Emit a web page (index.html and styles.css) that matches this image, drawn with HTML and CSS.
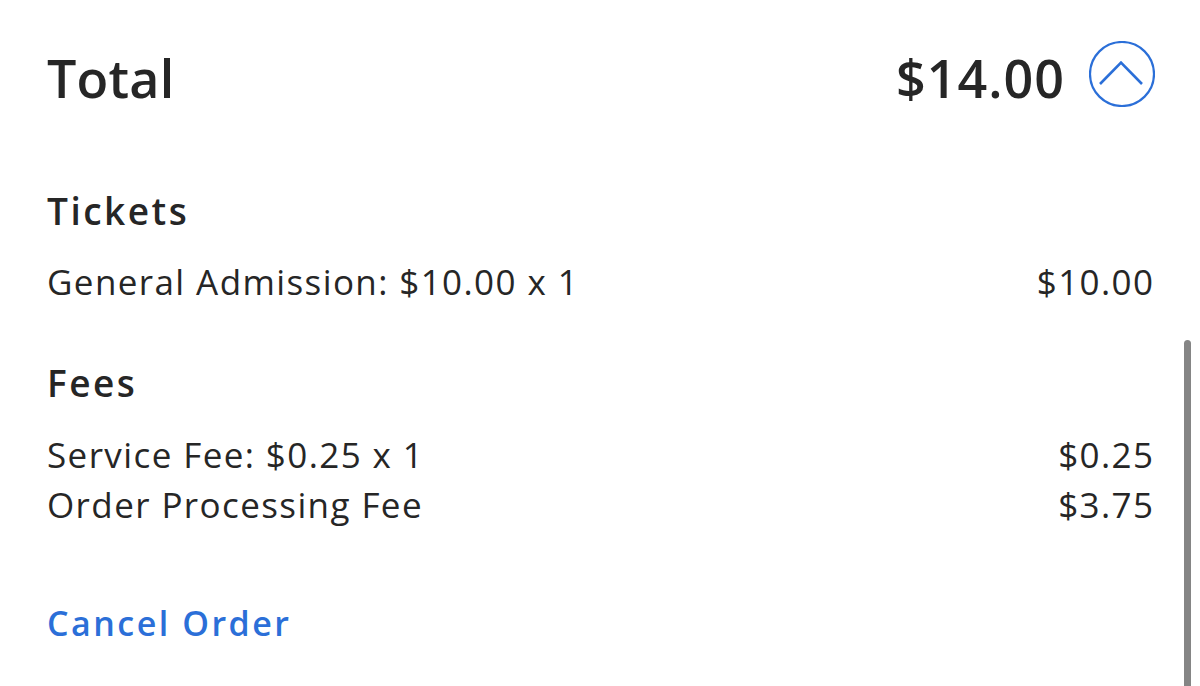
FILE: index.html
```html
<!DOCTYPE html>
<html lang="en">
<head>
<meta charset="utf-8">
<title>Order Summary</title>
<link rel="stylesheet" href="styles.css">
</head>
<body>
<main class="panel">
  <header class="total-row">
    <h1 class="total-label">Total</h1>
    <div class="total-right">
      <span class="total-amount">$14.00</span>
      <button class="toggle" aria-label="Collapse">
        <svg viewBox="0 0 66 66" width="66" height="66">
          <circle cx="33" cy="33" r="32" fill="none" stroke="#2b6fd8" stroke-width="2.2"/>
          <polyline points="11,43 32,21.5 53,43" fill="none" stroke="#2b6fd8" stroke-width="2.6"/>
        </svg>
      </button>
    </div>
  </header>

  <section class="group group-tickets">
    <h2 class="group-title">Tickets</h2>
    <div class="line"><span>General Admission: $10.00 x 1</span><span>$10.00</span></div>
  </section>

  <section class="group group-fees">
    <h2 class="group-title">Fees</h2>
    <div class="line"><span>Service Fee: $0.25 x 1</span><span>$0.25</span></div>
    <div class="line"><span>Order Processing Fee</span><span>$3.75</span></div>
  </section>

  <a class="cancel" href="#">Cancel Order</a>

  <div class="scrollbar"></div>
</main>
</body>
</html>
```

FILE: styles.css
```css
* { box-sizing: border-box; }
html, body { margin: 0; padding: 0; background: #fff; }
body {
  width: 1200px;
  height: 686px;
  overflow: hidden;
  font-family: "Open Sans", "Noto Sans", sans-serif;
  color: #262626;
}
.panel {
  position: relative;
  height: 686px;
  padding: 41px 47px 0 47px;
}
.total-row {
  display: flex;
  justify-content: space-between;
  align-items: center;
  height: 66px;
}
.total-label {
  margin: 0;
  font-size: 52px;
  font-weight: 600;
  line-height: 66px;
  padding-top: 8px;
  letter-spacing: 0.2px;
}
.total-right {
  display: flex;
  align-items: center;
  gap: 24px;
  margin-right: -2px;
}
.total-amount {
  font-size: 52px;
  font-weight: 600;
  line-height: 66px;
  padding-top: 8px;
  letter-spacing: 1px;
}
.toggle {
  display: block;
  width: 66px;
  height: 66px;
  padding: 0;
  border: 0;
  background: none;
}
.toggle svg { display: block; }
.group-tickets { margin-top: 79px; }
.group-fees { margin-top: 51px; }
.group-title {
  margin: 0 0 21px 0;
  font-size: 37px;
  font-weight: 600;
  line-height: 50px;
  letter-spacing: 2.5px;
}
.group-fees .group-title { margin-bottom: 22px; }
.line {
  display: flex;
  justify-content: space-between;
  font-size: 35px;
  line-height: 50px;
  letter-spacing: 1.4px;
}
.line span:last-child { margin-right: -1.4px; }
.cancel {
  display: inline-block;
  margin-top: 68px;
  font-size: 34px;
  font-weight: 600;
  line-height: 50px;
  letter-spacing: 2.5px;
  color: #2b6fd8;
  text-decoration: none;
}
.scrollbar {
  position: absolute;
  right: 9px;
  top: 340px;
  bottom: 0;
  width: 7px;
  border-radius: 3.5px 3.5px 0 0;
  background: #858585;
}
```
